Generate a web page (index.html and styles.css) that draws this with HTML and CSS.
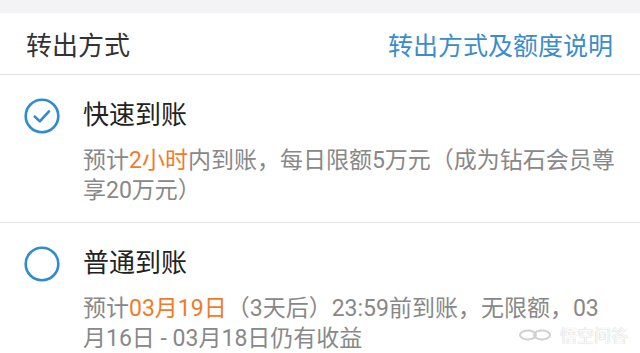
FILE: index.html
```html
<!DOCTYPE html>
<html lang="zh-CN">
  <head>
    <meta charset="UTF-8" />
    <meta name="viewport" content="width=device-width, initial-scale=1.0" />
    <title>转出方式</title>
    <link rel="stylesheet" href="styles.css">
  </head>
  <body>
    <div class="top-gap"></div>
    <div class="card">
      <div class="header">
        <span class="header-title">转出方式</span>
        <a class="header-link" href="#">转出方式及额度说明</a>
      </div>

      <div class="option">
        <svg class="radio" width="36" height="36" viewBox="0 0 36 36">
          <circle cx="18" cy="18" r="16.3" fill="none" stroke="#2f8bd0" stroke-width="2.6" />
          <path d="M10.8 18.6 L15.8 23.4 L25 13.4" fill="none" stroke="#2f8bd0" stroke-width="2.6" stroke-linecap="round" stroke-linejoin="round" />
        </svg>
        <div class="option-body">
          <div class="option-title">快速到账</div>
          <div class="option-desc">预计<span class="hl">2小时</span>内到账，每日限额5万元（成为钻石会员尊享20万元）</div>
        </div>
      </div>

      <div class="option">
        <svg class="radio" width="36" height="36" viewBox="0 0 36 36">
          <circle cx="18" cy="18" r="16.3" fill="none" stroke="#2f8bd0" stroke-width="2.6" />
        </svg>
        <div class="option-body">
          <div class="option-title">普通到账</div>
          <div class="option-desc">预计<span class="hl">03月19日</span>（3天后）23:59前到账，无限额，03月16日 - 03月18日仍有收益</div>
        </div>
      </div>
    </div>

    <div class="watermark">
      <svg width="34" height="14" viewBox="0 0 34 14">
        <ellipse cx="10" cy="7" rx="8" ry="4.5" fill="none" stroke="#d0d0d0" stroke-width="2" />
        <ellipse cx="24" cy="7" rx="8" ry="4.5" fill="none" stroke="#d0d0d0" stroke-width="2" />
      </svg>
      <span>悟空问答</span>
    </div>
  </body>
</html>
```

FILE: styles.css
```css
body {
  margin: 0;
  background-color: #f3f3f6;
  font-family: Roboto, "Noto Sans CJK SC", sans-serif;
}

.top-gap {
  height: 13px;
}

.card {
  background-color: #fff;
}

.header {
  display: flex;
  justify-content: space-between;
  align-items: center;
  height: 61px;
  padding: 0 27px 0 26px;
  border-bottom: 1px solid #e3e3e3;
}

.header-title {
  font-size: 26px;
  color: #333;
}

.header-link {
  font-size: 25px;
  color: #3a8dcc;
  text-decoration: none;
}

.option {
  display: flex;
  align-items: flex-start;
  gap: 23px;
  padding: 22px 20px 16px 24px;
  border-bottom: 1px solid #e8e8e8;
}

.option:last-child {
  border-bottom: none;
}

.radio {
  flex-shrink: 0;
  margin-top: 1px;
}

.option-title {
  font-size: 26px;
  line-height: 36px;
  color: #222;
}

.option-desc {
  margin-top: 13px;
  font-size: 23px;
  line-height: 30px;
  color: #888;
}

.hl {
  color: #f07b2b;
}

.watermark {
  position: absolute;
  right: 12px;
  bottom: 6px;
  display: flex;
  align-items: center;
  gap: 8px;
  font-size: 17px;
  color: #fafafa;
  text-shadow: 0 0 1px #b8b8b8;
}
```
